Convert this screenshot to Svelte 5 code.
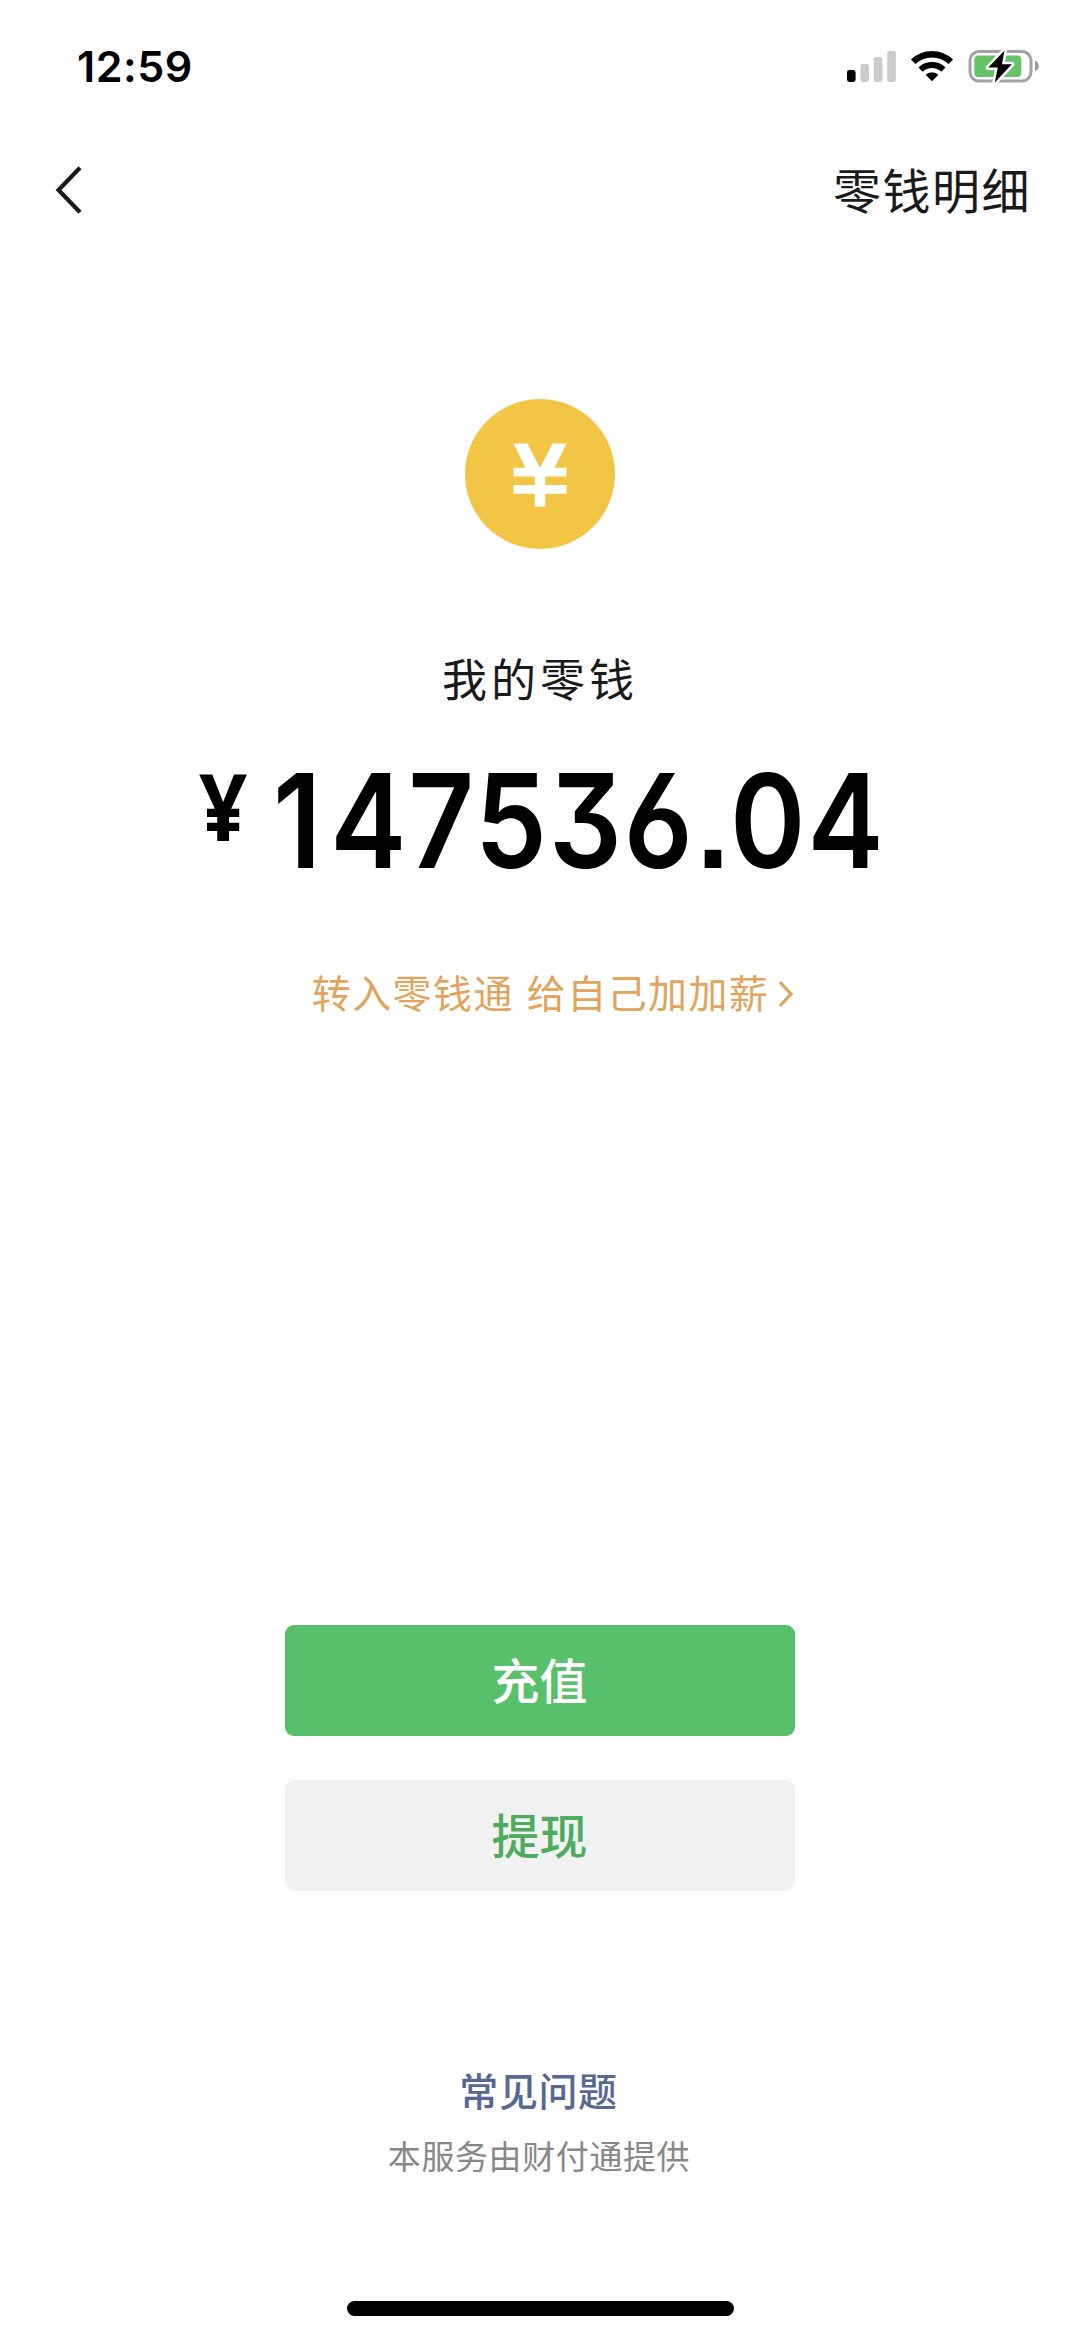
<script lang="ts">
    type Props = {
        time?: string
        balance?: string
    }

    let { time = '12:59', balance = '147536.04' }: Props = $props()

    const bars = [12, 18, 25, 31]
</script>

<div class="screen">
    <div class="status">
        <span class="time">{time}</span>
        <div class="indicators">
            <svg class="signal" width="49" height="31" viewBox="0 0 49 31">
                {#each bars as height, i}
                    <rect x={i * 13.4} y={31 - height} width="8.6" {height} rx="2.4" fill={i === 0 ? '#000' : '#cbcbcb'} />
                {/each}
            </svg>
            <svg class="wifi" width="44" height="32" viewBox="0 0 44 32">
                <path d="M3.2 11.8A27 27 0 0 1 40.8 11.8" fill="none" stroke="#000" stroke-width="6.4" />
                <path d="M10.6 19.6A16.5 16.5 0 0 1 33.4 19.6" fill="none" stroke="#000" stroke-width="6" />
                <path d="M22 31.2L15.6 24.8A9.2 9.2 0 0 1 28.4 24.8Z" />
            </svg>
            <svg class="battery" width="72" height="38" viewBox="0 0 72 38">
                <rect x="2" y="4.5" width="61" height="29.5" rx="9" fill="#fff" stroke="#a2a2a4" stroke-width="3" />
                <rect x="6.3" y="8.5" width="47" height="21.5" rx="4" fill="#65c466" />
                <path d="M67 13.5C72 15.5 72 22.5 67 24.5Z" fill="#99999b" />
                <path
                    d="M36.5 3.5L20.3 20.6H29.8L26.8 35.5L43.8 17.2H34Z"
                    fill="#000"
                    stroke="#fff"
                    stroke-width="5"
                    stroke-linejoin="round"
                    paint-order="stroke"
                />
            </svg>
        </div>
    </div>

    <header class="nav">
        <svg class="back" width="30" height="50" viewBox="0 0 30 50">
            <path d="M27 2.8L5.5 25L27 47.2" fill="none" stroke="#1a1a1a" stroke-width="4.2" />
        </svg>
        <span class="details">零钱明细</span>
    </header>

    <main class="wallet">
        <svg class="coin" width="150" height="150" viewBox="0 0 150 150">
            <circle cx="75" cy="75" r="75" fill="#f3c545" />
            <path d="M48.5 44.5H62.3L75 68.7L87.7 44.5H101.5L88 72H62Z" fill="#fff" />
            <path d="M48.5 73.2H101.5M48.5 90.4H101.5" stroke="#fff" stroke-width="8.8" />
            <path d="M75 70V107.7" stroke="#fff" stroke-width="10.4" />
        </svg>
        <h1 class="label">我的零钱</h1>
        <div class="balance">
            <span class="currency">¥</span>
            <span class="amount">{balance}</span>
        </div>
        <div class="promo">
            <span>转入零钱通</span>
            <span>给自己加加薪</span>
            <svg width="16" height="28" viewBox="0 0 16 28">
                <path d="M2 2.2L13 14L2 25.8" fill="none" stroke="#e0a45c" stroke-width="3.2" />
            </svg>
        </div>
    </main>

    <div class="actions">
        <button class="btn primary">充值</button>
        <button class="btn">提现</button>
    </div>

    <footer class="footer">
        <span class="faq">常见问题</span>
        <span class="provider">本服务由财付通提供</span>
        <div class="home"></div>
    </footer>
</div>

<style>
    :global(body) {
        background: #fefefe;
    }

    .screen {
        display: flex;
        flex-direction: column;
        align-items: center;
        width: 1080px;
        height: 2339px;
        overflow: hidden;
        background: #fefefe;
        color: #1a1a1a;
        font-family: 'Noto Sans CJK SC', sans-serif;
    }

    .status {
        display: flex;
        align-items: center;
        justify-content: space-between;
        box-sizing: border-box;
        width: 100%;
        height: 132px;
        padding: 0 40px 0 77px;
    }

    .time {
        color: #000;
        font-family: Inter, sans-serif;
        font-size: 43px;
        font-weight: 600;
        line-height: 52px;
        letter-spacing: 0.5px;
    }

    .indicators {
        display: flex;
        align-items: center;
    }

    .wifi {
        margin-left: 14px;
    }

    .battery {
        margin-left: 14px;
    }

    .nav {
        display: flex;
        align-items: center;
        justify-content: space-between;
        box-sizing: border-box;
        width: 100%;
        height: 116px;
        padding: 0 49px 0 53px;
    }

    .details {
        padding-bottom: 4px;
        font-size: 48px;
        line-height: 60px;
        letter-spacing: 1.5px;
    }

    .wallet {
        display: flex;
        flex-direction: column;
        align-items: center;
        padding-top: 151px;
    }

    .label {
        margin: 99px 0 0;
        font-size: 45px;
        font-weight: 400;
        line-height: 60px;
        letter-spacing: 4px;
    }

    .balance {
        display: flex;
        align-items: flex-start;
        width: 682px;
        height: 140px;
        margin-top: 42px;
        color: #000;
        font-family: Inter, sans-serif;
    }

    .currency {
        width: 72px;
        font-family: 'Noto Sans', sans-serif;
        font-size: 94px;
        font-weight: 700;
        line-height: 111px;
        transform: scaleX(0.9);
        transform-origin: left;
    }

    .amount {
        margin-left: 20px;
        font-size: 130px;
        font-weight: 600;
        line-height: 142px;
        letter-spacing: 2.2px;
        white-space: nowrap;
        font-feature-settings: 'cv03', 'cv09', 'ss07';
        transform: scaleX(0.88);
        transform-origin: left;
    }

    .amount::first-letter {
        letter-spacing: 10px;
    }

    .promo {
        display: flex;
        align-items: center;
        gap: 13px;
        margin: 74px 0 0 26px;
        color: #e0a45c;
        font-size: 39px;
        line-height: 60px;
        letter-spacing: 1.4px;
    }

    .promo span {
        padding-bottom: 5px;
        line-height: 55px;
    }

    .promo svg {
        margin-left: -4px;
    }

    .actions {
        display: flex;
        flex-direction: column;
        gap: 44px;
        margin-top: 601px;
    }

    .btn {
        width: 510px;
        height: 111px;
        padding: 0 1px 5px 0;
        border: 0;
        border-radius: 9px;
        background: #f2f2f2;
        color: #4fac5e;
        font-family: inherit;
        font-size: 48px;
        font-weight: 500;
    }

    .primary {
        background: #58c06b;
        color: #fff;
    }

    .footer {
        display: flex;
        flex-direction: column;
        align-items: center;
        margin-top: 170px;
    }

    .faq {
        margin-right: 3px;
        color: #576891;
        font-size: 39px;
        font-weight: 500;
        line-height: 56px;
        letter-spacing: 0.6px;
    }

    .provider {
        margin-top: 14px;
        margin-right: 2px;
        color: #888;
        font-size: 33px;
        line-height: 48px;
        letter-spacing: 0.6px;
    }

    .home {
        width: 387px;
        height: 15px;
        margin-top: 122px;
        border-radius: 8px;
        background: #000;
    }
</style>
